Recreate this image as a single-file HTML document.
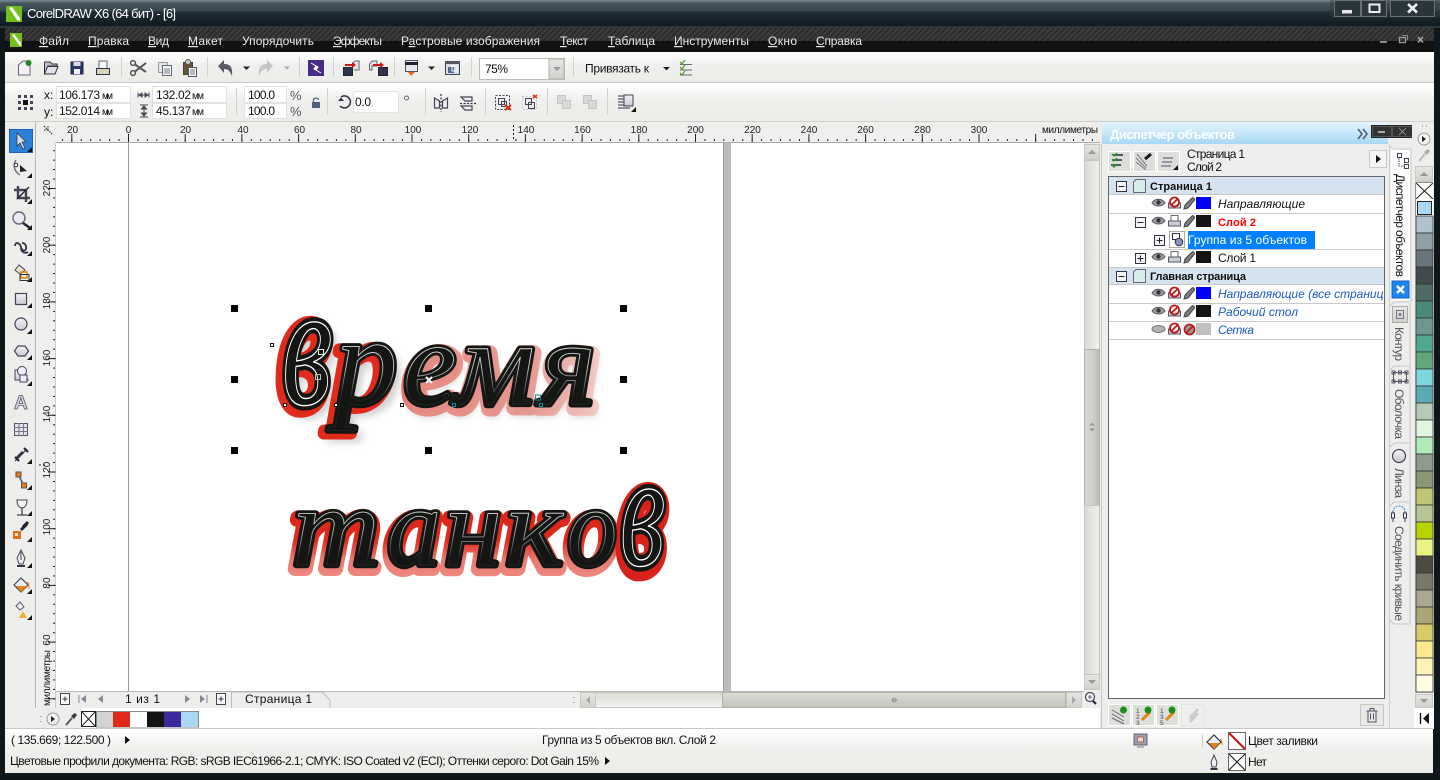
<!DOCTYPE html>
<html><head><meta charset="utf-8"><title>CorelDRAW X6</title>
<style>
html,body{margin:0;padding:0;background:#10171b;width:1440px;height:780px;overflow:hidden}
svg{display:block}
text{font-family:"Liberation Sans",sans-serif;font-size:12px;fill:#111}
.m{fill:#e8e8e8;font-size:12px}
.r{font-size:10px;fill:#222;text-anchor:middle}
.art{font-family:"Liberation Serif",serif;font-style:italic;font-weight:normal}
.ic{fill:none;stroke:#445;stroke-width:1.2}
</style></head><body>
<svg xmlns="http://www.w3.org/2000/svg" width="1440" height="780" viewBox="0 0 1440 780">
<defs>
<filter id="blur" x="-10%" y="-30%" width="120%" height="160%"><feGaussianBlur stdDeviation="4"/></filter>
<linearGradient id="gT" x1="0" x2="0" y1="0" y2="1"><stop offset="0" stop-color="#7a8a92"/><stop offset=".12" stop-color="#46565e"/><stop offset=".4" stop-color="#36464e"/><stop offset=".45" stop-color="#1e2c34"/><stop offset="1" stop-color="#101a20"/></linearGradient>
<linearGradient id="gTb" x1="0" x2="0" y1="0" y2="1"><stop offset="0" stop-color="#ffffff"/><stop offset=".45" stop-color="#efefed"/><stop offset="1" stop-color="#ecece9"/></linearGradient>
<linearGradient id="gD" x1="0" x2="0" y1="0" y2="1"><stop offset="0" stop-color="#e6f5fe"/><stop offset="1" stop-color="#a6d8f4"/></linearGradient>
<linearGradient id="gV" x1="0" x2="1" y1="0" y2="0"><stop offset="0" stop-color="#d6d8d2"/><stop offset=".5" stop-color="#cfd1cb"/><stop offset="1" stop-color="#b8bab4"/></linearGradient>
<linearGradient id="gH" x1="0" x2="0" y1="0" y2="1"><stop offset="0" stop-color="#dcded8"/><stop offset="1" stop-color="#bfc1bb"/></linearGradient>
<linearGradient id="gL" x1="0" x2="1" y1="0" y2="0"><stop offset="0" stop-color="#d8dad4"/><stop offset="1" stop-color="#f0f0ee"/></linearGradient>
<linearGradient id="gLh" x1="0" x2="0" y1="0" y2="1"><stop offset="0" stop-color="#d8dad4"/><stop offset="1" stop-color="#f4f4f2"/></linearGradient>
<linearGradient id="gBtn" x1="0" x2="0" y1="0" y2="1"><stop offset="0" stop-color="#e6e7e3"/><stop offset="1" stop-color="#cfd1cb"/></linearGradient>
<linearGradient id="gSh" x1="0" x2="0" y1="0" y2="1"><stop offset="0" stop-color="#f4f4f6"/><stop offset="1" stop-color="#c8c9d2"/></linearGradient>
<linearGradient id="artA" gradientUnits="userSpaceOnUse" x1="280" x2="596" y1="0" y2="0"><stop offset="0" stop-color="#e02a1a"/><stop offset=".33" stop-color="#e02a1a"/><stop offset=".42" stop-color="#e8786e"/><stop offset=".78" stop-color="#e8877e"/><stop offset="1" stop-color="#f6c4be"/></linearGradient>
<linearGradient id="artB" gradientUnits="userSpaceOnUse" x1="0" x2="0" y1="482" y2="580"><stop offset="0" stop-color="#d8221a"/><stop offset=".55" stop-color="#e02a1a"/><stop offset=".75" stop-color="#ea7a70"/><stop offset="1" stop-color="#ee8e86"/></linearGradient>
<linearGradient id="hlA" gradientUnits="userSpaceOnUse" x1="0" x2="0" y1="320" y2="410"><stop offset="0" stop-color="#fff"/><stop offset=".55" stop-color="#bbb"/><stop offset=".85" stop-color="#222"/></linearGradient>
<linearGradient id="hlB" gradientUnits="userSpaceOnUse" x1="0" x2="0" y1="490" y2="570"><stop offset="0" stop-color="#fff"/><stop offset=".55" stop-color="#999"/><stop offset=".85" stop-color="#222"/></linearGradient>
<pattern id="stripe" width="4" height="4" patternUnits="userSpaceOnUse" patternTransform="rotate(45)"><rect width="4" height="4" fill="#3c3c3c"/><rect width="2" height="4" fill="#2c2c2c"/></pattern>
<pattern id="hm" width="9.45" height="3" patternUnits="userSpaceOnUse" patternTransform="translate(128,139)"><rect width="1" height="2" fill="#222"/></pattern>
<pattern id="hM" width="56.7" height="8" patternUnits="userSpaceOnUse" patternTransform="translate(128,134)"><rect width="1" height="8" fill="#222"/></pattern>
<pattern id="vm" width="3" height="9.45" patternUnits="userSpaceOnUse" patternTransform="translate(53,188)"><rect width="2" height="1" fill="#222"/></pattern>
<pattern id="vM" width="8" height="56.7" patternUnits="userSpaceOnUse" patternTransform="translate(48,188)"><rect width="8" height="1" fill="#222"/></pattern>
<symbol id="eye" width="14" height="10" viewBox="0 0 14 10" overflow="visible"><path d="M0 5C3 0 10 0 13 5C10 9 3 9 0 5Z" fill="#9a9ca6" stroke="#555"/><circle cx="6.5" cy="4.5" r="2.2" fill="#333"/></symbol>
<symbol id="eyeoff" width="14" height="10" viewBox="0 0 14 10" overflow="visible"><ellipse cx="6.5" cy="5" rx="6.5" ry="3.5" fill="#b0b2b8" stroke="#777"/></symbol>
<symbol id="prn" width="13" height="12" viewBox="0 0 13 12" overflow="visible"><rect x="3" y="0.5" width="7" height="6" fill="#fff" stroke="#667"/><rect x="0.5" y="6" width="12" height="5" fill="#ccced6" stroke="#556"/></symbol>
<symbol id="noprn" width="13" height="12" viewBox="0 0 13 12" overflow="visible"><rect x="0.5" y="6" width="12" height="5" fill="#ccced6" stroke="#556"/><circle cx="6.5" cy="5" r="4.5" fill="#fff" stroke="#c01818" stroke-width="1.8"/><path d="M3.3 8L9.7 2" stroke="#c01818" stroke-width="1.8"/></symbol>
<symbol id="pen" width="13" height="13" viewBox="0 0 13 13" overflow="visible"><path d="M1 12L2 8L9 1C10 0 12 2 11.500 3L5 11Z" fill="#7c7e88" stroke="#444"/></symbol>
<symbol id="nopen" width="13" height="13" viewBox="0 0 13 13" overflow="visible"><circle cx="6.500" cy="6.500" r="5" fill="#999" stroke="#c01818" stroke-width="1.800"/><path d="M3 10L10 3" stroke="#c01818" stroke-width="1.800"/></symbol>
<symbol id="minus" width="11" height="11" viewBox="0 0 11 11" overflow="visible"><rect x=".5" y=".5" width="10" height="10" fill="#f4f4f8" stroke="#334"/><path d="M2.500 5.500H8.500" stroke="#223"/></symbol>
<symbol id="plus" width="11" height="11" viewBox="0 0 11 11" overflow="visible"><rect x=".5" y=".5" width="10" height="10" fill="#f4f4f8" stroke="#334"/><path d="M2.500 5.500H8.500M5.500 2.500V8.500" stroke="#223"/></symbol>
<symbol id="pg" width="13" height="14" viewBox="0 0 13 14" overflow="visible"><path d="M.5 3L3 .5H12.500V13.500H.5Z" fill="#d8ebe8" stroke="#667"/></symbol>
</defs>

<!-- window frame -->
<rect width="1440" height="780" fill="#10171b"/>
<rect width="1440" height="27" fill="url(#gT)"/>
<rect x="0" y="26.500" width="1440" height="1" fill="#4a555a"/>
<g transform="translate(6,6)"><rect width="16" height="16" fill="#72bf1e"/><path d="M3 2L6 1L14 12L14 15L11 14Z" fill="#fff"/></g>
<text x="27" y="18" style="font-size:13px;fill:#fff" textLength="149">CorelDRAW X6 (64 бит) - [6]</text>
<rect x="1330" y="0" width="110" height="18" fill="url(#stripe)" opacity=".45"/>
<g fill="#2a363c" stroke="#667278"><rect x="1334.500" y=".5" width="26" height="16"/><rect x="1361.500" y=".5" width="25" height="16"/><rect x="1390.500" y=".5" width="44" height="16"/></g>
<rect x="1342" y="10" width="10" height="3.500" fill="#e8e8e8"/>
<rect x="1369.500" y="4.500" width="10" height="7.500" fill="none" stroke="#eee" stroke-width="2"/>
<path d="M1408 4L1417 12.500M1417 4L1408 12.500" stroke="#eee" stroke-width="2.600"/>

<!-- menu -->
<rect x="5" y="28" width="1429" height="13" fill="url(#stripe)"/>
<rect x="5" y="41" width="1429" height="11" fill="#111"/>
<g transform="translate(10,33)"><rect width="12" height="14" fill="#72bf1e"/><path d="M2 2L4 1L11 10L11 13L9 12Z" fill="#fff"/></g>
<g>
<text class="m" x="39" y="45" textLength="30"><tspan style="text-decoration:underline">Ф</tspan>айл</text>
<text class="m" x="88" y="45" textLength="41"><tspan style="text-decoration:underline">П</tspan>равка</text>
<text class="m" x="148" y="45" textLength="21"><tspan style="text-decoration:underline">В</tspan>ид</text>
<text class="m" x="188" y="45" textLength="35"><tspan style="text-decoration:underline">М</tspan>акет</text>
<text class="m" x="242" y="45" textLength="72">Упорядочить</text>
<text class="m" x="333" y="45" textLength="49"><tspan style="text-decoration:underline">Э</tspan>ффекты</text>
<text class="m" x="401" y="45" textLength="139">Р<tspan style="text-decoration:underline">а</tspan>стровые изображения</text>
<text class="m" x="560" y="45" textLength="28"><tspan style="text-decoration:underline">Т</tspan>екст</text>
<text class="m" x="608" y="45" textLength="47"><tspan style="text-decoration:underline">Т</tspan>аблица</text>
<text class="m" x="674" y="45" textLength="75"><tspan style="text-decoration:underline">И</tspan>нструменты</text>
<text class="m" x="768" y="45" textLength="29"><tspan style="text-decoration:underline">О</tspan>кно</text>
<text class="m" x="816" y="45" textLength="46"><tspan style="text-decoration:underline">С</tspan>правка</text>
</g>
<rect x="1380" y="41" width="7" height="2" fill="#888"/>
<rect x="1399.500" y="37.500" width="6" height="5" fill="none" stroke="#999" stroke-width="1.300"/><path d="M1402 35.500H1407.500V40" fill="none" stroke="#888"/>
<path d="M1418 37L1423 42.500M1423 37L1418 42.500" stroke="#aaa" stroke-width="1.500"/>

<!-- toolbars -->
<rect x="5" y="52" width="1429" height="30" fill="url(#gTb)"/>
<rect x="5" y="82" width="1429" height="1" fill="#c8c8c6"/>
<rect x="5" y="83" width="1429" height="38" fill="url(#gTb)"/>
<rect x="5" y="121" width="1429" height="1" fill="#cfcfcd"/>
<rect x="5" y="122" width="1429" height="607" fill="#ededeb"/>
<g fill="#cfcfcd"><rect x="121" y="57" width="1" height="20"/><rect x="207" y="57" width="1" height="20"/><rect x="299" y="57" width="1" height="20"/><rect x="333" y="57" width="1" height="20"/><rect x="394" y="57" width="1" height="20"/><rect x="471" y="57" width="1" height="20"/><rect x="573" y="57" width="1" height="20"/>
<rect x="236" y="88" width="1" height="27"/><rect x="327" y="88" width="1" height="27"/><rect x="425" y="88" width="1" height="27"/><rect x="485" y="88" width="1" height="27"/><rect x="547" y="88" width="1" height="27"/><rect x="607" y="88" width="1" height="27"/></g>

<!-- std toolbar icons -->
<path d="M18.500 75V65L23 61H30V75Z" fill="#f2f2f4" stroke="#667"/><circle cx="28.500" cy="63" r="3" fill="#1c8c1c"/>
<path d="M44.500 74V62H50L52 64H57V66H48L45 74H55L58 66" fill="#bfc3cc" stroke="#334"/><path d="M44.500 74L47.500 66.500H58L55 74Z" fill="#dfe1e6" stroke="#334"/>
<rect x="71" y="62" width="12" height="12" fill="#2b3766" stroke="#1c2544"/><rect x="73.500" y="62" width="7" height="4" fill="#d8dae6"/><rect x="74" y="69" width="6" height="5" fill="#eef"/>
<rect x="99" y="61" width="8" height="9" fill="#f4f6f4" stroke="#667"/><rect x="96.500" y="68.500" width="13" height="6" fill="#d8d4b8" stroke="#334"/>
<g fill="none" stroke="#555" stroke-width="1.500"><circle cx="133" cy="73" r="2.400"/><circle cx="133" cy="63" r="2.400"/><path d="M135 64.500L146 72M135 71.500L146 63" stroke-width="2"/></g>
<rect x="158.500" y="62.500" width="9" height="10" fill="#dfe8e4" stroke="#99a"/><rect x="162.500" y="65.500" width="9" height="10" fill="#f4f6f6" stroke="#667"/><path d="M164 69H170M164 71H170M164 73H170" stroke="#778"/>
<rect x="183.500" y="62.500" width="9" height="12" fill="#6a5236" stroke="#443"/><circle cx="188" cy="62" r="2.500" fill="#ccc" stroke="#555"/><rect x="188.500" y="67.500" width="8" height="9" fill="#f8f8f8" stroke="#556"/><path d="M190 70H195M190 72H195M190 74H195" stroke="#778"/>
<path d="M218 66L224 60V64C230 64 233 67 232 76C230 71 228 69 224 69V73Z" fill="#565a64"/>
<path d="M243 66.500h7l-3.500 3.500z" fill="#222"/>
<path d="M273 66L267 60V64C261 64 258 67 259 76C261 71 263 69 267 69V73Z" fill="#c6c8c6"/>
<path d="M284 66.500h6l-3 3z" fill="#aaa"/>
<rect x="308" y="60" width="16" height="16" fill="#4a2a88"/><path d="M311 63L316 66L314 69L321 73L316 70L318 67Z" fill="#fff" stroke="#fff"/>
<rect x="343.500" y="67.500" width="9" height="8" fill="#2c3450" stroke="#223"/><path d="M352 65L355 61H359V70H354" fill="#dfe6ea" stroke="#667"/><path d="M345 65H354" stroke="#c81818" stroke-width="2"/><path d="M352 62l4 3-4 3z" fill="#c81818"/>
<rect x="378.500" y="67.500" width="9" height="8" fill="#2c3450" stroke="#223"/><path d="M369.500 70V64L372 61H377V66H372V70Z" fill="#dfe6ea" stroke="#667"/><path d="M373 65H381" stroke="#c81818" stroke-width="2"/><path d="M380 62l4 3-4 3z" fill="#c81818"/>
<rect x="405.500" y="60.500" width="12" height="11" fill="#e8e8ea" stroke="#556"/><rect x="405" y="62" width="13" height="3" fill="#223"/><path d="M408 72L411 76L415 72Z" fill="#f06020"/>
<path d="M428 66.500h7l-3.500 3.500z" fill="#222"/>
<rect x="445.500" y="61.500" width="14" height="13" fill="#d8dce6" stroke="#445"/><rect x="445" y="61" width="15" height="3" fill="#556"/><rect x="448" y="67" width="6" height="6" fill="#556a90"/><rect x="452" y="66" width="5" height="5" fill="none" stroke="#fff"/>
<rect x="479.500" y="58.500" width="85" height="21" fill="#fff" stroke="#bbbdb8"/><rect x="549" y="59" width="15" height="20" fill="url(#gBtn)" stroke="#b0b2ac"/><path d="M553 67h8l-4 4z" fill="#99a"/>
<text x="485" y="73" style="font-size:12px" textLength="23">75%</text>
<text x="585" y="72.500" textLength="64" style="font-size:12px">Привязать к</text>
<path d="M663 67h7l-3.500 3.500z" fill="#222"/>
<g stroke="#667" stroke-width="1"><path d="M680 64.500H692M680 70H692M680 75H692"/></g><path d="M680 62l2 2 3-4M680 67l2 2 3-4M680 73l2 2 3-4" fill="none" stroke="#5a9a30" stroke-width="1.300"/>

<!-- property bar -->
<g fill="#445"><rect x="18" y="95" width="3" height="3"/><rect x="24" y="95" width="3" height="3"/><rect x="30" y="95" width="3" height="3"/><rect x="18" y="101" width="3" height="3"/><rect x="23" y="100" width="5" height="5" fill="#111"/><rect x="30" y="101" width="3" height="3"/><rect x="18" y="107" width="3" height="3"/><rect x="24" y="107" width="3" height="3"/><rect x="30" y="107" width="3" height="3"/></g>
<text x="44" y="99">x:</text><text x="44" y="116">y:</text>
<g fill="#fff" stroke="#e0e2e0"><rect x="56.500" y="86.500" width="74" height="16"/><rect x="56.500" y="103.500" width="74" height="15"/><rect x="152.500" y="86.500" width="74" height="16"/><rect x="152.500" y="103.500" width="74" height="15"/><rect x="244.500" y="86.500" width="42" height="16"/><rect x="244.500" y="103.500" width="42" height="15"/><rect x="353.500" y="91.500" width="45" height="21" rx="2"/></g>
<text x="59" y="99" textLength="41" style="font-size:12px">106.173</text><text x="102" y="99" textLength="11" style="font-size:10px">мм</text>
<text x="59" y="115" textLength="41" style="font-size:12px">152.014</text><text x="102" y="115" textLength="11" style="font-size:10px">мм</text>
<text x="156" y="99" textLength="35" style="font-size:12px">132.02</text><text x="192" y="99" textLength="12" style="font-size:10px">мм</text>
<text x="156" y="115" textLength="35" style="font-size:12px">45.137</text><text x="192" y="115" textLength="12" style="font-size:10px">мм</text>
<text x="248" y="99" textLength="27" style="font-size:12px">100.0</text><text x="248" y="115" textLength="27" style="font-size:12px">100.0</text>
<text x="290" y="100" style="font-size:13px;fill:#556">%</text><text x="290" y="116" style="font-size:13px;fill:#556">%</text>
<path d="M138 95H149M138 92.500V97.500M149 92.500V97.500M139 95l3-2v4zM148 95l-3-2v4z" stroke="#445" fill="#445"/>
<path d="M144 106V116M140 105H148M140 117H148M144 106l-2.500 3h5zM144 116l-2.500-3h5z" stroke="#445" fill="#445"/>
<rect x="312" y="102" width="8" height="6" fill="#556080"/><path d="M313.500 102V100C313.500 97.500 318.500 97.500 318.500 100" fill="none" stroke="#556080" stroke-width="1.300"/>
<path d="M341 97A6 6 0 1 1 340 106" fill="none" stroke="#334" stroke-width="1.500"/><path d="M338 101H344L341 97.500Z" fill="#334"/>
<text x="355" y="106" style="font-size:12px" textLength="16">0.0</text><circle cx="406.500" cy="98" r="2" fill="none" stroke="#667"/>
<g class="ic"><path d="M434.500 98V108H439.500V101ZM447.500 98V108H442.500V101Z"/><path d="M441 94V112" stroke-dasharray="2 1.500" stroke="#334"/><path d="M461 97H472V101H465ZM461 106H472V110H465Z"/><path d="M460 103.500H476" stroke-dasharray="2 1.500" stroke="#334"/></g>
<rect x="495.500" y="95.500" width="14" height="14" fill="none" stroke="#445" stroke-dasharray="2 1.500"/><rect x="498.500" y="98.500" width="6" height="6" fill="none" stroke="#445"/><rect x="501.500" y="101.500" width="5" height="5" fill="none" stroke="#445"/><path d="M505 105L511 110M511 105L505 110" stroke="#e03018" stroke-width="2"/>
<rect x="522.500" y="96.500" width="14" height="13" fill="none" stroke="#c8c8d8" stroke-dasharray="2 1.500"/><rect x="525.500" y="98.500" width="6" height="6" fill="none" stroke="#445"/><rect x="528.500" y="102.500" width="6" height="6" fill="none" stroke="#445"/><path d="M533 95L537 98M537 95L533 98" stroke="#e03018" stroke-width="1.500"/>
<g fill="#d8dad8" stroke="#c4c6c4"><rect x="557.500" y="95.500" width="8" height="8"/><rect x="562.500" y="100.500" width="8" height="8"/><rect x="583.500" y="95.500" width="8" height="8"/><rect x="588.500" y="100.500" width="8" height="8"/></g>
<path d="M618 96H626M618 99H626M618 102H626M618 105H626M618 108H630" stroke="#334"/><rect x="624" y="95" width="9" height="11" fill="url(#gSh)" stroke="#445"/><path d="M636 112V107L631 112Z" fill="#111"/>

<!-- toolbox -->
<rect x="5" y="122" width="31" height="607" fill="#ededeb"/>
<rect x="35" y="122" width="1" height="586" fill="#b8b8b6"/>
<rect x="9.500" y="129.500" width="23" height="23" fill="#2a7fd9" stroke="#1a62b2"/>
<path d="M17 133V146L20 143L23 149L25 148L22 142L26 142Z" fill="#d8dce4" stroke="#333" stroke-width=".7"/>
<g fill="#111"><path d="M32 152V147L27 152Z"/><path d="M32 178V173L27 178Z"/><path d="M32 204V199L27 204Z"/><path d="M32 230V225L27 230Z"/><path d="M32 256V251L27 256Z"/><path d="M32 282V277L27 282Z"/><path d="M32 308V303L27 308Z"/><path d="M32 334V329L27 334Z"/><path d="M32 360V355L27 360Z"/><path d="M32 386V381L27 386Z"/><path d="M32 464V459L27 464Z"/><path d="M32 490V485L27 490Z"/><path d="M32 516V511L27 516Z"/><path d="M32 542V537L27 542Z"/><path d="M32 568V563L27 568Z"/><path d="M32 594V589L27 594Z"/><path d="M32 620V615L27 620Z"/></g>
<path d="M16 160C12 166 15 172 20 175" fill="none" stroke="#667" stroke-width="1.300"/><circle cx="16" cy="165" r="1.800" fill="#fff" stroke="#333"/><path d="M20 165L27 171L20 172Z" fill="#223"/>
<path d="M18 186V198H30M14 190H26V202" fill="none" stroke="#445" stroke-width="2.400"/><path d="M17 199L29 187" stroke="#223" stroke-width="1.300"/>
<circle cx="19" cy="218" r="6" fill="#e9ebf0" stroke="#667" stroke-width="1.400"/><path d="M23 223L30 228" stroke="#223" stroke-width="2.400"/>
<path d="M15 246C15 241 20 243 21 247C22 252 27 252 26 246C25 243 23 243 22 243M21 248C21 252 25 254 28 252" fill="none" stroke="#334" stroke-width="1.800"/>
<path d="M15 270L19 265L25 270L20 274Z" fill="#e8e4d0" stroke="#445"/><rect x="21" y="272" width="6" height="6" fill="none" stroke="#e08010" stroke-width="1.500"/><rect x="20" y="274.500" width="9" height="6" fill="none" stroke="#334"/>
<rect x="15.500" y="293.500" width="11" height="11" fill="url(#gSh)" stroke="#445" stroke-width="1.200"/>
<circle cx="21" cy="324" r="6" fill="url(#gSh)" stroke="#445" stroke-width="1.200"/>
<path d="M18 346H25L28.500 351L25 356H18L14.500 351Z" fill="url(#gSh)" stroke="#445" stroke-width="1.200"/>
<path d="M15 370H22L28 380H15Z" fill="url(#gSh)" stroke="#445"/><circle cx="22" cy="371" r="4.500" fill="#eef" stroke="#445"/><rect x="20" y="375" width="7" height="7" fill="#eef" stroke="#445"/>
<text x="14" y="409" style="font-size:19px;font-weight:bold;fill:#d8dae2;stroke:#556;stroke-width:.8" textLength="14">A</text>
<rect x="14.500" y="423.500" width="13" height="12" fill="#e0e2ea" stroke="#556"/><path d="M14 427.500H28M14 431.500H28M19 423V436M23.500 423V436" stroke="#778"/>
<path d="M15 461L27 449" stroke="#334" stroke-width="1.200"/><path d="M15 457L19 461M24 448L28 452" stroke="#223" stroke-width="2"/><path d="M17 458L23 452" stroke="#334" stroke-width="3"/>
<path d="M19 476L24 486" stroke="#556" stroke-width="1.500"/><rect x="16" y="472" width="5" height="5" fill="#ec7a10" stroke="#555"/><rect x="21.500" y="483" width="5" height="5" fill="#ec7a10" stroke="#555"/>
<path d="M17 500H27C27 506 24 508 22 508C20 508 17 506 17 500Z" fill="#f4f4f6" stroke="#445"/><path d="M22 508V515M17 515H27" stroke="#445" stroke-width="1.300"/>
<path d="M21 530L27 524M28 522L23 527" stroke="#223" stroke-width="3"/><rect x="13" y="531" width="8" height="8" fill="#e07010"/><rect x="15" y="533" width="3" height="3" fill="#f8e8d0"/>
<path d="M21 550L25 558L23 564H19L17 558Z" fill="#eee" stroke="#445"/><path d="M21 552V560" stroke="#445"/><path d="M17 566H25" stroke="#334" stroke-width="2"/>
<path d="M14 585L21 578L28 585L21 592Z" fill="#eef" stroke="#445" stroke-width="1.200"/><path d="M16 586H27L21 592Z" fill="#e88410"/><path d="M27 582C29 583 29 586 29 589" stroke="#e88410" fill="none"/>
<path d="M16 606L20 602L24 607L20 610Z" fill="#eee" stroke="#556"/><path d="M19 618L23 611L27 618Z" fill="#f0b030"/>

<!-- rulers -->
<rect x="36" y="122" width="1064" height="21" fill="#efefed"/>
<rect x="36" y="143" width="20" height="565" fill="#efefed"/>
<rect x="56" y="139" width="1042" height="3" fill="url(#hm)"/>
<rect x="56" y="134" width="1030" height="8" fill="url(#hM)"/>
<rect x="53" y="143" width="3" height="564" fill="url(#vm)"/>
<rect x="48" y="143" width="8" height="564" fill="url(#vM)"/>
<rect x="56" y="142" width="1044" height="1" fill="#a8a8a6"/>
<rect x="55.500" y="143" width="1" height="565" fill="#a8a8a6"/>
<g>
<text class="r" x="72.500" y="133">20</text><text class="r" x="128.500" y="133">0</text><text class="r" x="185.500" y="133">20</text><text class="r" x="243" y="133">40</text><text class="r" x="299.500" y="133">60</text><text class="r" x="356" y="133">80</text><text class="r" x="413" y="133">100</text><text class="r" x="470" y="133">120</text><text class="r" x="526" y="133">140</text><text class="r" x="582.500" y="133">160</text><text class="r" x="639" y="133">180</text><text class="r" x="695.500" y="133">200</text><text class="r" x="752.500" y="133">220</text><text class="r" x="809" y="133">240</text><text class="r" x="865.500" y="133">260</text><text class="r" x="922.500" y="133">280</text><text class="r" x="979" y="133">300</text>
<text x="1042" y="133" style="font-size:10px" textLength="56">миллиметры</text>
</g>
<g>
<text class="r" transform="translate(50,188) rotate(-90)">220</text><text class="r" transform="translate(50,245) rotate(-90)">200</text><text class="r" transform="translate(50,301) rotate(-90)">180</text><text class="r" transform="translate(50,358) rotate(-90)">160</text><text class="r" transform="translate(50,414) rotate(-90)">140</text><text class="r" transform="translate(50,470) rotate(-90)">120</text><text class="r" transform="translate(50,527) rotate(-90)">100</text><text class="r" transform="translate(50,583) rotate(-90)">80</text><text class="r" transform="translate(50,640) rotate(-90)">60</text>
<text x="0" y="0" transform="translate(50,706) rotate(-90)" style="font-size:10px" textLength="56">миллиметры</text>
</g>
<path d="M513.500 125V141" stroke="#111" stroke-dasharray="2 2"/><path d="M39 465H46" stroke="#111" stroke-dasharray="2 2"/>
<path d="M44 126L53 135M44 130H48M48 126V130" fill="none" stroke="#222" stroke-dasharray="1.500 1"/>

<!-- canvas -->
<rect x="56" y="143" width="1028" height="548" fill="#fff"/>
<rect x="128" y="143" width="1" height="548" fill="#9a9a9a"/>
<rect x="723" y="143" width="1" height="548" fill="#9a9a9a"/>
<rect x="724" y="143" width="7" height="548" fill="#bcbcbc"/>

<!-- art: время -->
<g transform="translate(3,8)" stroke="#aaa" stroke-width="8" opacity=".55" filter="url(#blur)">
<text class="art" style="font-size:116px;fill:#aaa" transform="translate(282,404) scale(1,1.500)">в</text>
<text class="art" style="font-size:125px;fill:#aaa" x="335" y="404">р</text>
<text class="art" style="font-size:120px;fill:#aaa" x="403" y="404">е</text>
<text class="art" style="font-size:120px;fill:#aaa" x="455" y="404" textLength="80" lengthAdjust="spacingAndGlyphs">м</text>
<text class="art" style="font-size:120px;fill:#aaa" x="540" y="404">я</text>
</g>
<g transform="translate(2,4)" stroke="url(#artA)" stroke-width="15" stroke-linejoin="round" opacity=".8">
<text class="art" style="font-size:120px;fill:url(#artA)" x="403" y="404">е</text>
<text class="art" style="font-size:120px;fill:url(#artA)" x="455" y="404" textLength="80" lengthAdjust="spacingAndGlyphs">м</text>
<text class="art" style="font-size:120px;fill:url(#artA)" x="540" y="404">я</text>
</g>
<g transform="translate(-4,3)" stroke="url(#artA)" stroke-width="12" stroke-linejoin="round">
<text class="art" style="font-size:116px;fill:url(#artA)" transform="translate(282,404) scale(1,1.500)">в</text>
<text class="art" style="font-size:125px;fill:url(#artA)" x="335" y="404">р</text>
</g>
<g stroke="#141614" stroke-width="6.500" stroke-linejoin="round">
<text class="art" style="font-size:116px;fill:#141614" transform="translate(282,404) scale(1,1.500)">в</text>
<text class="art" style="font-size:125px;fill:#141614" x="335" y="404">р</text>
<text class="art" style="font-size:120px;fill:#141614" x="403" y="404">е</text>
<text class="art" style="font-size:120px;fill:#141614" x="455" y="404" textLength="80" lengthAdjust="spacingAndGlyphs">м</text>
<text class="art" style="font-size:120px;fill:#141614" x="540" y="404">я</text>
</g>
<g stroke="url(#hlA)" stroke-width=".9" stroke-linejoin="round">
<text class="art" style="font-size:116px;fill:none" transform="translate(282,404) scale(1,1.500)">в</text>
<text class="art" style="font-size:125px;fill:none" x="335" y="404">р</text>
<text class="art" style="font-size:120px;fill:none" x="403" y="404">е</text>
<text class="art" style="font-size:120px;fill:none" x="455" y="404" textLength="80" lengthAdjust="spacingAndGlyphs">м</text>
<text class="art" style="font-size:120px;fill:none" x="540" y="404">я</text>
</g>

<!-- art: танков -->
<g transform="translate(-1,4)" stroke="url(#artB)" stroke-width="14" stroke-linejoin="round">
<text class="art" style="font-size:112px;fill:url(#artB)" x="292" y="565" textLength="88" lengthAdjust="spacingAndGlyphs">т</text>
<text class="art" style="font-size:112px;fill:url(#artB)" x="387" y="565" textLength="54" lengthAdjust="spacingAndGlyphs">а</text>
<text class="art" style="font-size:112px;fill:url(#artB)" x="444" y="565" textLength="58" lengthAdjust="spacingAndGlyphs">н</text>
<text class="art" style="font-size:112px;fill:url(#artB)" x="505" y="565" textLength="58" lengthAdjust="spacingAndGlyphs">к</text>
<text class="art" style="font-size:112px;fill:url(#artB)" x="567" y="565" textLength="50" lengthAdjust="spacingAndGlyphs">о</text>
<text class="art" style="font-size:104px;fill:url(#artB)" transform="translate(620,565) scale(1,1.550)">в</text>
</g>
<g stroke="#141614" stroke-width="6.500" stroke-linejoin="round">
<text class="art" style="font-size:112px;fill:#141614" x="292" y="565" textLength="88" lengthAdjust="spacingAndGlyphs">т</text>
<text class="art" style="font-size:112px;fill:#141614" x="387" y="565" textLength="54" lengthAdjust="spacingAndGlyphs">а</text>
<text class="art" style="font-size:112px;fill:#141614" x="444" y="565" textLength="58" lengthAdjust="spacingAndGlyphs">н</text>
<text class="art" style="font-size:112px;fill:#141614" x="505" y="565" textLength="58" lengthAdjust="spacingAndGlyphs">к</text>
<text class="art" style="font-size:112px;fill:#141614" x="567" y="565" textLength="50" lengthAdjust="spacingAndGlyphs">о</text>
<text class="art" style="font-size:104px;fill:#141614" transform="translate(620,565) scale(1,1.550)">в</text>
</g>
<g stroke="url(#hlB)" stroke-width=".9" stroke-linejoin="round">
<text class="art" style="font-size:112px;fill:none" x="292" y="565" textLength="88" lengthAdjust="spacingAndGlyphs">т</text>
<text class="art" style="font-size:112px;fill:none" x="387" y="565" textLength="54" lengthAdjust="spacingAndGlyphs">а</text>
<text class="art" style="font-size:112px;fill:none" x="444" y="565" textLength="58" lengthAdjust="spacingAndGlyphs">н</text>
<text class="art" style="font-size:112px;fill:none" x="505" y="565" textLength="58" lengthAdjust="spacingAndGlyphs">к</text>
<text class="art" style="font-size:112px;fill:none" x="567" y="565" textLength="50" lengthAdjust="spacingAndGlyphs">о</text>
<text class="art" style="font-size:104px;fill:none" transform="translate(620,565) scale(1,1.550)">в</text>
</g>

<!-- handles -->
<g fill="#000"><rect x="231" y="305" width="7" height="7"/><rect x="425" y="305" width="7" height="7"/><rect x="620" y="305" width="7" height="7"/><rect x="231" y="376" width="7" height="7"/><rect x="620" y="376" width="7" height="7"/><rect x="231" y="447" width="7" height="7"/><rect x="425" y="447" width="7" height="7"/><rect x="620" y="447" width="7" height="7"/></g>
<g fill="#fff" stroke="#111"><rect x="270.500" y="343.500" width="3" height="3"/><rect x="283.500" y="403.500" width="3" height="3"/><rect x="334.500" y="403.500" width="3" height="3"/><rect x="400.500" y="403.500" width="3" height="3"/></g>
<g fill="none" stroke="#0c8a9a"><rect x="452.500" y="403.500" width="3" height="3"/><rect x="539.500" y="403.500" width="3" height="3"/><rect x="535.500" y="395" width="5" height="5"/></g>
<rect x="318.500" y="349.500" width="5" height="5" fill="none" stroke="#eee"/><rect x="315.500" y="374.500" width="5" height="5" fill="none" stroke="#bbb"/>
<path d="M426 377L432 383M432 377L426 383" stroke="#fff" stroke-width="2"/>

<!-- scrollbars -->
<rect x="1084" y="143" width="16" height="549" fill="#ededeb"/>
<rect x="1084.500" y="144.500" width="15" height="15" fill="url(#gBtn)" stroke="#c4c6c0"/><path d="M1088 154h8l-4-4z" fill="#999"/>
<rect x="1084.500" y="160.500" width="15" height="189" fill="url(#gL)" stroke="#c4c6c0"/>
<rect x="1084.500" y="349.500" width="15" height="156" fill="url(#gV)" stroke="#b0b2ac"/><path d="M1089 425.500l3-3 3 3zM1089 428.500l3 3 3-3z" fill="#999"/>
<rect x="1084.500" y="505.500" width="15" height="169" fill="url(#gL)" stroke="#c4c6c0"/>
<rect x="1084.500" y="674.500" width="15" height="15" fill="url(#gBtn)" stroke="#c4c6c0"/><path d="M1088 680h8l-4 4z" fill="#999"/>
<rect x="56" y="691" width="1028" height="17" fill="#ededeb"/>
<rect x="56" y="691" width="1028" height="1" fill="#b8b8b6"/>
<rect x="580.500" y="692.500" width="15" height="15" fill="url(#gBtn)" stroke="#c4c6c0"/><path d="M590 696v8l-4-4z" fill="#aaa"/>
<rect x="595.500" y="692.500" width="127" height="15" fill="url(#gLh)" stroke="#c4c6c0"/>
<rect x="722.500" y="692.500" width="343" height="15" fill="url(#gH)" stroke="#b0b2ac"/><path d="M891 700l3-3v6zM894.500 697l3 3-3 3z" fill="#999"/>
<rect x="1066.500" y="692.500" width="15" height="15" fill="url(#gBtn)" stroke="#c4c6c0"/><path d="M1072 696v8l4-4z" fill="#aaa"/>
<circle cx="1090" cy="697" r="4.500" fill="#f4f4f4" stroke="#445" stroke-width="1.200"/><circle cx="1090" cy="697" r="1.800" fill="#889"/><path d="M1093 701L1096 704" stroke="#223" stroke-width="2"/>
<path d="M574 697v1M574 702v1" stroke="#777"/>

<!-- page nav -->
<rect x="60.500" y="693.500" width="9" height="11" fill="#f8f8f8" stroke="#445"/><path d="M62.500 699H67.500M65 696.500V701.500" stroke="#334"/>
<rect x="216.500" y="693.500" width="9" height="11" fill="#f8f8f8" stroke="#445"/><path d="M218.500 699H223.500M221 696.500V701.500" stroke="#334"/>
<path d="M79 695V703" stroke="#889"/><path d="M86 695v8l-5-4zM103 695v8l-5-4z" fill="#889"/>
<path d="M185 695v8l5-4zM200 695v8l5-4z" fill="#889"/><path d="M207 695V703" stroke="#889"/>
<text x="125" y="703" style="font-size:12px" textLength="35">1 из 1</text>
<rect x="231" y="692" width="1" height="16" fill="#bbb"/>
<path d="M231 692H322L330 700V708" fill="none" stroke="#bbb"/>
<text x="245" y="703" style="font-size:12px" textLength="67">Страница 1</text>

<!-- color bar -->
<rect x="36" y="708" width="1064" height="21" fill="#fff"/>
<rect x="36" y="708" width="27" height="21" fill="#ededeb"/>
<rect x="61" y="708" width="20" height="21" fill="#ededeb"/>
<path d="M41 716v1M41 721v1" stroke="#777"/>
<circle cx="53" cy="719" r="6" fill="#f0f0f0" stroke="#999"/><path d="M51 716v6l4-3z" fill="#222"/>
<path d="M66 725L72 718" stroke="#556" stroke-width="2"/><path d="M71 716L75 713L77 715L74 719Z" fill="#334"/>
<rect x="81.500" y="711.500" width="14" height="15" fill="#fff" stroke="#222"/><path d="M82 712L95 726M95 712L82 726" stroke="#222"/>
<rect x="96.500" y="711.500" width="102" height="15.500" fill="#fff" stroke="#888"/>
<rect x="97" y="712" width="16" height="15" fill="#d2d4d2"/><rect x="113" y="712" width="17" height="15" fill="#e0291a"/><rect x="130" y="712" width="17" height="15" fill="#fff"/><rect x="147" y="712" width="17" height="15" fill="#141414"/><rect x="164" y="712" width="17" height="15" fill="#3c2a9c"/><rect x="181" y="712" width="17" height="15" fill="#a8d8f2"/>

<!-- docker -->
<rect x="1100" y="122" width="290" height="607" fill="#ededeb"/>
<rect x="1102" y="122" width="286" height="22" fill="url(#gD)"/>
<rect x="1101" y="144" width="1" height="585" fill="#c8c8c6"/>
<text x="1110" y="139" style="font-size:13px;font-weight:bold;fill:#fff" textLength="125">Диспетчер объектов</text>
<path d="M1358 129L1362 134L1358 139M1363 129L1367 134L1363 139" fill="none" stroke="#556" stroke-width="1.500"/>
<rect x="1371" y="125" width="43" height="13" fill="#222"/><rect x="1372.500" y="126.500" width="19" height="10" fill="#333" stroke="#555"/><rect x="1392.500" y="126.500" width="20" height="10" fill="#333" stroke="#555"/><rect x="1378" y="131" width="7" height="2" fill="#aaa"/><path d="M1399 128L1406 135M1406 128L1399 135" stroke="#888"/>
<g fill="#dcdeda" stroke="#fff"><rect x="1108.500" y="151.500" width="22" height="20"/><rect x="1133.500" y="151.500" width="22" height="20"/><rect x="1157.500" y="151.500" width="22" height="20"/></g>
<path d="M1113 155h10M1112 160h10M1111 165h10" stroke="#556" stroke-width="2"/><path d="M1112 154l2 2 3-3M1112 159l2 2 3-3M1112 165l2 2 3-3" fill="none" stroke="#2a9a30" stroke-width="1.400"/>
<path d="M1136 158L1146 168M1136 162L1146 170M1137 154L1147 166" stroke="#778" fill="none"/><path d="M1145 159L1151 154" stroke="#111" stroke-width="3"/>
<path d="M1163 158h10M1162 162h10M1161 166h10" stroke="#99a" stroke-width="2"/><path d="M1178 170v-5l-5 5z" fill="#111"/>
<text x="1187" y="158" textLength="58">Страница 1</text>
<text x="1187" y="171" textLength="35">Слой 2</text>
<rect x="1369.500" y="150.500" width="17" height="17" fill="#f4f4f2" stroke="#c8c8c6"/><path d="M1376 155v8l5-4z" fill="#111"/>

<!-- tree -->
<rect x="1108.500" y="176.500" width="276" height="522" fill="#fff" stroke="#666"/>
<rect x="1109" y="177" width="275" height="18" fill="#d5e3f0"/><rect x="1109" y="267" width="275" height="18" fill="#d5e3f0"/>
<g fill="#c8c8c8"><rect x="1109" y="194" width="275" height="1"/><rect x="1109" y="213" width="275" height="1"/><rect x="1109" y="249" width="275" height="1"/><rect x="1109" y="267" width="275" height="1"/><rect x="1109" y="284" width="275" height="1"/><rect x="1109" y="303" width="275" height="1"/><rect x="1109" y="321" width="275" height="1"/><rect x="1109" y="339" width="275" height="1"/></g>
<use href="#minus" x="1116" y="181"/><use href="#pg" x="1133" y="179"/>
<text x="1150" y="190" style="font-weight:bold;font-size:11px" textLength="62">Страница 1</text>
<use href="#eye" x="1152" y="198"/><use href="#noprn" x="1168" y="197"/><use href="#pen" x="1183" y="197"/><rect x="1196" y="197" width="15" height="12" fill="#0000ff"/>
<text x="1218" y="208" style="font-style:italic" textLength="87">Направляющие</text>
<use href="#minus" x="1135" y="217"/><use href="#eye" x="1152" y="216"/><use href="#prn" x="1168" y="215"/><use href="#pen" x="1183" y="215"/><rect x="1196" y="215" width="15" height="12" fill="#141414"/>
<text x="1218" y="226" style="fill:#ff0000;font-weight:bold;font-size:11px" textLength="38">Слой 2</text>
<use href="#plus" x="1154" y="235"/><rect x="1169.500" y="231.500" width="15" height="16" fill="#fff" stroke="#aaa"/><rect x="1172.500" y="233.500" width="7" height="6" fill="none" stroke="#334"/><circle cx="1179" cy="242" r="3.800" fill="#8890c0" stroke="#334"/>
<rect x="1188" y="231" width="127" height="18" fill="#0080ff"/>
<text x="1188" y="244" style="fill:#fff" textLength="119">Группа из 5 объектов</text>
<use href="#plus" x="1135" y="253"/><use href="#eye" x="1152" y="252"/><use href="#prn" x="1168" y="251"/><use href="#pen" x="1183" y="251"/><rect x="1196" y="251" width="15" height="12" fill="#141414"/>
<text x="1218" y="262" textLength="38">Слой 1</text>
<use href="#minus" x="1116" y="271"/><use href="#pg" x="1133" y="269"/>
<text x="1150" y="280" style="font-weight:bold;font-size:11px" textLength="96">Главная страница</text>
<use href="#eye" x="1152" y="288"/><use href="#noprn" x="1168" y="287"/><use href="#pen" x="1183" y="287"/><rect x="1196" y="287" width="15" height="12" fill="#0000ff"/>
<clipPath id="cl"><rect x="1109" y="285" width="275" height="20"/></clipPath>
<text x="1218" y="298" style="font-style:italic;fill:#1a58c8" clip-path="url(#cl)">Направляющие (все страницы)</text>
<use href="#eye" x="1152" y="306"/><use href="#noprn" x="1168" y="305"/><use href="#pen" x="1183" y="305"/><rect x="1196" y="305" width="15" height="12" fill="#141414"/>
<text x="1218" y="316" style="font-style:italic;fill:#1a58c8" textLength="80">Рабочий стол</text>
<use href="#eyeoff" x="1152" y="324"/><use href="#noprn" x="1168" y="323"/><use href="#nopen" x="1183" y="323"/><rect x="1196" y="323" width="15" height="12" fill="#c0c0c0"/>
<text x="1218" y="334" style="font-style:italic;fill:#1a58c8" textLength="36">Сетка</text>

<!-- docker bottom -->
<g fill="#dcdeda" stroke="#fff"><rect x="1108.500" y="704.500" width="22" height="21"/><rect x="1132.500" y="704.500" width="22" height="21"/><rect x="1156.500" y="704.500" width="22" height="21"/></g>
<rect x="1181.500" y="704.500" width="22" height="21" fill="#efefed" stroke="#e4e4e2"/>
<path d="M1112 710L1124 717M1112 714L1124 721M1112 718L1124 724" stroke="#667" fill="none"/><circle cx="1123.500" cy="710" r="3.500" fill="#1c8c1c"/>
<text x="1136" y="713" style="font-size:6.500px;fill:#445">1</text><text x="1136" y="719" style="font-size:6.500px;fill:#445">2</text><text x="1136" y="725" style="font-size:6.500px;fill:#445">3</text><path d="M1142 720L1150 712" stroke="#e88410" stroke-width="3"/><circle cx="1148" cy="710" r="3.500" fill="#1c8c1c"/>
<text x="1160" y="713" style="font-size:6.500px;fill:#445">1</text><text x="1160" y="719" style="font-size:6.500px;fill:#445">3</text><text x="1160" y="725" style="font-size:6.500px;fill:#445">5</text><path d="M1166 720L1174 712" stroke="#e88410" stroke-width="3"/><circle cx="1172" cy="710" r="3.500" fill="#1c8c1c"/>
<path d="M1190 718L1198 709M1190 722L1198 713" stroke="#ccc" stroke-width="3"/>
<rect x="1360.500" y="704.500" width="23" height="21" fill="#e8e8e6" stroke="#c8c8c6"/><path d="M1366.500 711H1377.500M1370 711V708.500H1374V711M1368 711V722H1376V711M1370.500 713.500V719.500M1373.500 713.500V719.500" fill="none" stroke="#556"/>

<!-- vertical tabs column -->
<rect x="1390" y="144" width="22" height="585" fill="#ededeb"/>
<rect x="1389" y="144" width="1" height="585" fill="#d0d0ce"/>
<path d="M1389.500 146L1394 149H1411V302" fill="none" stroke="#ccc"/>
<rect x="1391" y="150" width="19" height="150" fill="#fff"/>
<g fill="#fff" stroke="#445" stroke-width="1"><rect x="1397.500" y="153.500" width="4" height="4"/><rect x="1404.500" y="158.500" width="4" height="4"/><rect x="1404.500" y="164.500" width="4" height="4"/></g><path d="M1399 158V166H1404" fill="none" stroke="#445" stroke-dasharray="1.500 1"/>
<text transform="translate(1396,174) rotate(90)" textLength="103">Диспетчер объектов</text>
<rect x="1392" y="281" width="17" height="17" fill="#1e84f0" stroke="#0f62c0"/><path d="M1397 286L1404 293M1404 286L1397 293" stroke="#fff" stroke-width="2.400"/>
<path d="M1409 302H1394L1390 306M1410 366H1394L1390 370M1410 443H1394L1390 447M1410 502H1394L1390 506M1410 624H1394L1390 620" stroke="#c8c8c6" fill="none"/>
<path d="M1410 302V624" stroke="#c8c8c6"/>
<rect x="1392.500" y="306.500" width="15" height="16" fill="url(#gBtn)" stroke="#aaa"/><rect x="1396.500" y="310.500" width="7" height="8" fill="none" stroke="#778"/><circle cx="1400" cy="314.500" r="1.500" fill="#778"/>
<text transform="translate(1395,327) rotate(90)" textLength="34" style="fill:#555">Контур</text>
<g fill="none" stroke="#556"><rect x="1393.500" y="372.500" width="13" height="9"/><rect x="1392" y="371" width="3" height="3"/><rect x="1405" y="371" width="3" height="3"/><rect x="1392" y="380" width="3" height="3"/><rect x="1405" y="380" width="3" height="3"/><rect x="1398.500" y="371" width="3" height="3"/><rect x="1398.500" y="380" width="3" height="3"/></g>
<text transform="translate(1395,389) rotate(90)" textLength="50" style="fill:#555">Оболочка</text>
<circle cx="1399" cy="456" r="6.500" fill="url(#gSh)" stroke="#445" stroke-width="1.200"/>
<text transform="translate(1395,468) rotate(90)" textLength="30" style="fill:#555">Линза</text>
<path d="M1393 512C1393 504 1405 504 1405 512" fill="none" stroke="#3a8fe0" stroke-dasharray="2 1"/><path d="M1393 511V522M1405 511V522" stroke="#445"/><rect x="1391.500" y="513" width="3" height="5" fill="#fff" stroke="#334"/><rect x="1403.500" y="513" width="3" height="5" fill="#fff" stroke="#334"/>
<text transform="translate(1395,526) rotate(90)" textLength="95" style="fill:#555">Соединить кривые</text>

<!-- palette -->
<rect x="1412" y="122" width="22" height="607" fill="#ededeb"/>
<path d="M1422 126h1M1426 126h1" stroke="#777"/>
<circle cx="1424" cy="139" r="6" fill="#f4f4f4" stroke="#999"/><path d="M1422 136v6l4-3z" fill="#222"/>
<path d="M1419 161L1425 154" stroke="#bbb" stroke-width="2"/><path d="M1424 152L1428 149L1430 151L1427 155Z" fill="#aaa"/>
<rect x="1415.500" y="166.500" width="17" height="15" fill="url(#gBtn)" stroke="#c8c8c6"/><path d="M1420 176h8l-4-4z" fill="#999"/>
<rect x="1415.500" y="182.500" width="17" height="510" fill="#333"/>
<rect x="1416" y="183" width="17" height="16" fill="#fff"/><path d="M1416 183L1433 199M1433 183L1416 199" stroke="#222"/>
<rect x="1416" y="199" width="17" height="17" fill="#fff"/><rect x="1417.500" y="201.500" width="14" height="13" fill="#a8d8f2" stroke="#222"/>
<g stroke="#333" stroke-width=".8">
<rect x="1416" y="216" width="17" height="17" fill="#afc3ce"/><rect x="1416" y="233" width="17" height="17" fill="#8f9fa6"/><rect x="1416" y="250" width="17" height="17" fill="#69757c"/><rect x="1416" y="267" width="17" height="17" fill="#414b4e"/><rect x="1416" y="284" width="17" height="17" fill="#4f6a66"/><rect x="1416" y="301" width="17" height="17" fill="#4b8a78"/><rect x="1416" y="318" width="17" height="17" fill="#6d9690"/>
<rect x="1416" y="335" width="17" height="17" fill="#4fa88f"/><rect x="1416" y="352" width="17" height="17" fill="#62a679"/><rect x="1416" y="369" width="17" height="17" fill="#7dd6dc"/><rect x="1416" y="386" width="17" height="17" fill="#5caab4"/><rect x="1416" y="403" width="17" height="17" fill="#b6c8b7"/><rect x="1416" y="420" width="17" height="17" fill="#def8e0"/><rect x="1416" y="437" width="17" height="17" fill="#b2ebb7"/><rect x="1416" y="454" width="17" height="17" fill="#8c9b8e"/><rect x="1416" y="471" width="17" height="17" fill="#8b9672"/><rect x="1416" y="488" width="17" height="17" fill="#bec574"/><rect x="1416" y="505" width="17" height="17" fill="#b7c596"/><rect x="1416" y="522" width="17" height="17" fill="#b8d400"/><rect x="1416" y="539" width="17" height="17" fill="#e8f285"/><rect x="1416" y="556" width="17" height="17" fill="#4e4b42"/><rect x="1416" y="573" width="17" height="17" fill="#7a7868"/><rect x="1416" y="590" width="17" height="17" fill="#aaa890"/><rect x="1416" y="607" width="17" height="17" fill="#aaa575"/><rect x="1416" y="624" width="17" height="17" fill="#d9cb6a"/><rect x="1416" y="641" width="17" height="17" fill="#ffe98c"/><rect x="1416" y="658" width="17" height="17" fill="#fff2b8"/><rect x="1416" y="675" width="17" height="17" fill="#fffbdf"/>
</g>
<rect x="1415.500" y="694.500" width="17" height="13" fill="url(#gBtn)" stroke="#c8c8c6"/><path d="M1420 699h8l-4 4z" fill="#999"/>
<rect x="1414" y="708" width="20" height="21" fill="#fff"/>
<path d="M1420.500 713V724" stroke="#111" stroke-width="1.400"/><path d="M1429 713v11l-6-5.500z" fill="#111"/>

<!-- status -->
<rect x="5" y="729" width="1428" height="44" fill="url(#gTb)"/>
<rect x="5" y="728" width="1428" height="1" fill="#c8c8c6"/>
<text x="11" y="744" textLength="100">( 135.669; 122.500 )</text>
<path d="M125 736v8l5-4z" fill="#111"/>
<text x="542" y="744" textLength="174">Группа из 5 объектов вкл. Слой 2</text>
<text x="10" y="765" textLength="589">Цветовые профили документа: RGB: sRGB IEC61966-2.1; CMYK: ISO Coated v2 (ECI); Оттенки серого: Dot Gain 15%</text>
<path d="M605 757v8l5-4z" fill="#111"/>
<rect x="1134" y="734" width="13" height="11" fill="#9aa0b0" stroke="#667"/><rect x="1137.500" y="737" width="6" height="5" fill="#ddd" stroke="#c06060"/><path d="M1137 747H1144" stroke="#778"/>
<rect x="1202" y="735" width="1" height="12" fill="#c8c8c6"/>
<path d="M1207 742L1214 735L1221 742L1214 749Z" fill="#eef" stroke="#334" stroke-width="1.200"/><path d="M1209 743H1220L1214 749Z" fill="#e88410"/><path d="M1220 739C1222 740 1222 742 1222 745" stroke="#e88410" fill="none"/>
<path d="M1214 755L1217 762L1216 767H1212L1211 762Z" fill="#eee" stroke="#445"/><path d="M1210.500 769H1217.500" stroke="#334" stroke-width="2"/>
<rect x="1228.500" y="732.500" width="17" height="17" fill="#fff" stroke="#666"/><path d="M1229 733L1245 749" stroke="#c8101c" stroke-width="2"/>
<rect x="1228.500" y="753.500" width="17" height="17" fill="#fff" stroke="#666"/><path d="M1229 754L1245 770M1245 754L1229 770" stroke="#111"/>
<text x="1248" y="745" textLength="70">Цвет заливки</text>
<text x="1248" y="766" textLength="19">Нет</text>
</svg>
</body></html>
